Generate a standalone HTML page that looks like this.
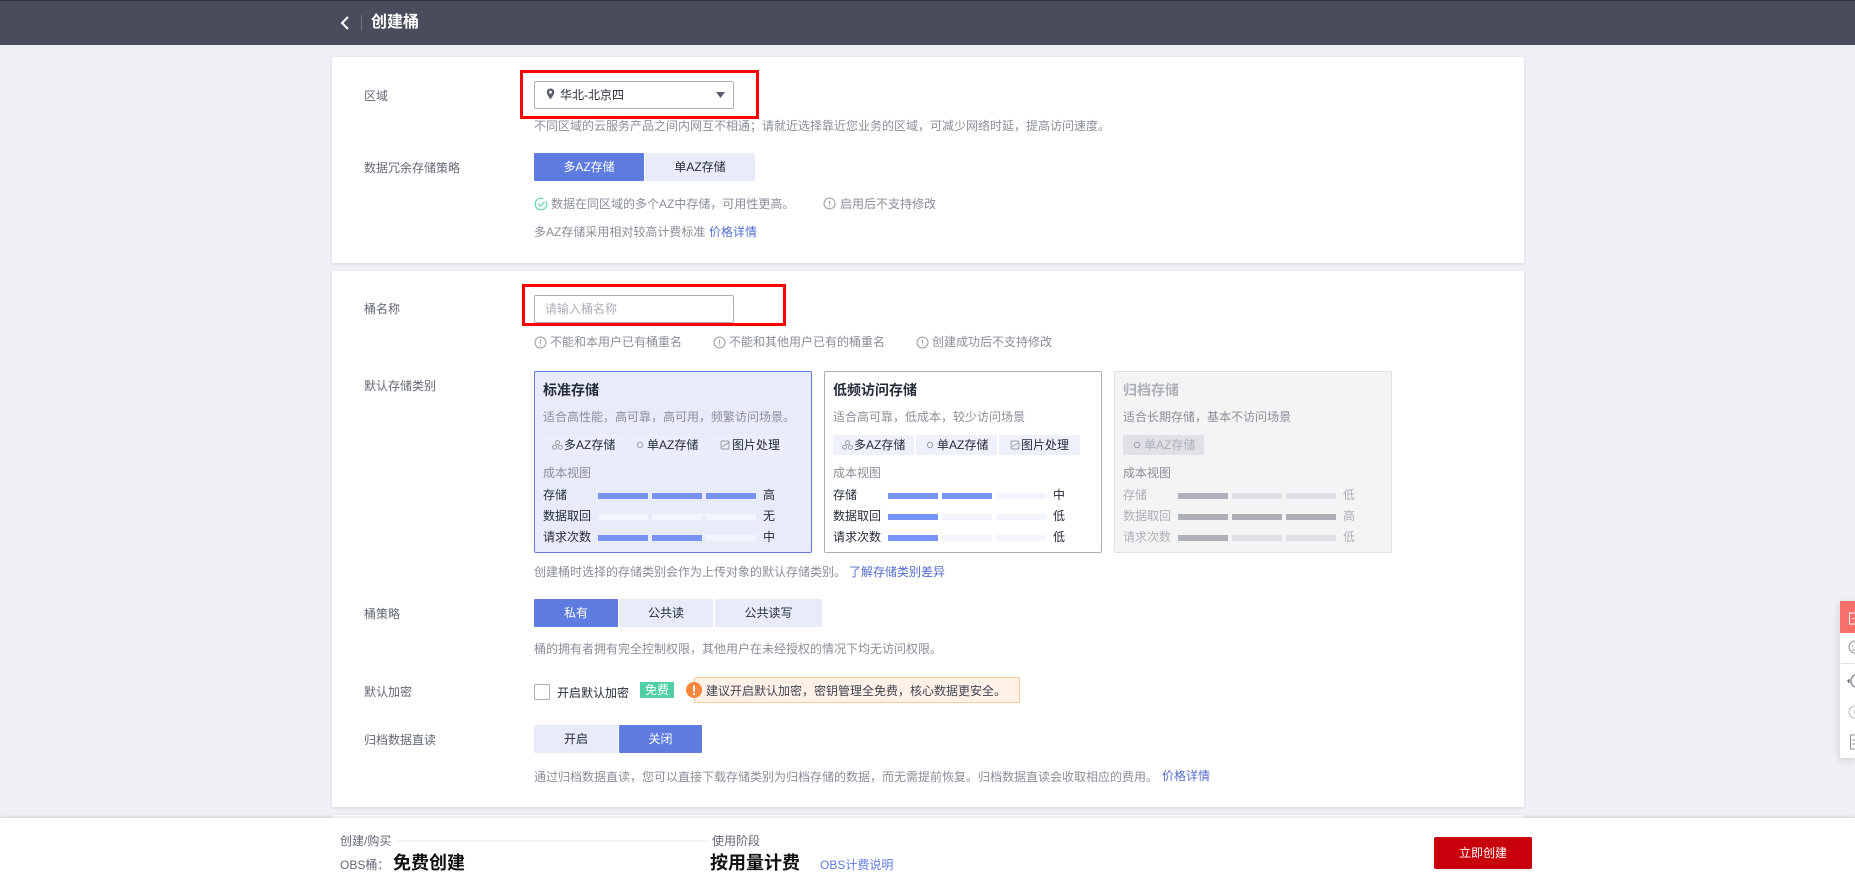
<!DOCTYPE html>
<html lang="zh-CN">
<head>
<meta charset="utf-8">
<title>创建桶</title>
<style>
html,body{margin:0;padding:0;width:1855px;height:879px;overflow:hidden;background:#eef0f5}
body{position:relative;font-family:"Liberation Sans","Noto Sans CJK SC",sans-serif;font-size:12px;color:#575d6c}
.a,.t,.b,.chip,svg{position:absolute}
.t{line-height:20px;height:20px;white-space:nowrap}
.lab{color:#636876}
.h{color:#8a8e99}
.d{color:#252b3a}
.l{color:#526ecc}
.card{position:absolute;left:332px;width:1192px;background:#fff;box-shadow:0 1px 3px rgba(60,70,90,.14)}
.b{line-height:28px;height:28px;text-align:center;background:#e8ecf8;color:#252b3a;border-radius:1px}
.b.on{background:#5e7ce0;color:#fff}
.box{position:absolute;top:371px;width:276px;height:180px;border:1px solid #adb0b8;background:#fff;border-radius:2px}
.title{font-size:14px;font-weight:bold;color:#252b3a}
.chip{top:435px;width:81px;height:20px;background:#eef1fb}
.bar{position:absolute;height:6px;width:50px;background:#f2f5fd}
.bar.f{background:#7693f5}
.bar.g{background:#adb0b8}
.bar.e{background:#dfe1e6}
.red{position:absolute;border:3px solid #f00;box-sizing:border-box}
.icn{fill:none;stroke:#9a9ea8;stroke-width:1}
</style>
</head>
<body>

<!-- header -->
<div class="a" style="left:0;top:0;width:1855px;height:45px;background:#484c5b;border-top:1px solid #30333d;box-sizing:border-box"></div>
<svg style="left:339px;top:15px" width="12" height="16" viewBox="0 0 12 16"><path d="M9 2L3 8l6 6" fill="none" stroke="#fff" stroke-width="2"/></svg>
<div class="a" style="left:361px;top:15px;width:1px;height:16px;background:#6f7380"></div>
<div class="t" style="left:371px;top:13px;font-size:16px;font-weight:bold;color:#fff">创建桶</div>

<!-- card 1 -->
<div class="card" style="top:57px;height:206px"></div>
<div class="t lab" style="left:364px;top:86px">区域</div>
<div class="a" style="left:534px;top:81px;width:200px;height:28px;box-sizing:border-box;border:1px solid #adb0b8;border-radius:2px;background:#fff"></div>
<svg style="left:546px;top:88px" width="9" height="13" viewBox="0 0 9 13"><path d="M4.5 0.5C2.3 0.5 0.8 2.2 0.8 4.2c0 2.6 3.7 7 3.7 7s3.7-4.4 3.7-7C8.2 2.2 6.7 0.5 4.5 0.5z" fill="#575d6c"/><circle cx="4.5" cy="4.2" r="1.4" fill="#fff"/></svg>
<div class="t d" style="left:560px;top:85px">华北-北京四</div>
<svg style="left:716px;top:92px" width="9" height="6" viewBox="0 0 9 6"><path d="M0 0h9L4.5 6z" fill="#575d6c"/></svg>
<div class="red" style="left:520px;top:70px;width:239px;height:49px"></div>
<div class="t h" style="left:534px;top:116px">不同区域的云服务产品之间内网互不相通；请就近选择靠近您业务的区域，可减少网络时延，提高访问速度。</div>

<div class="t lab" style="left:364px;top:158px">数据冗余存储策略</div>
<div class="b on" style="left:534px;top:153px;width:110px">多AZ存储</div>
<div class="b" style="left:645px;top:153px;width:110px">单AZ存储</div>
<svg style="left:534px;top:197px" width="14" height="14" viewBox="0 0 14 14"><path d="M12.2 4.5A5.8 5.8 0 1 1 9.5 1.8" fill="none" stroke="#5fd9ae" stroke-width="1.2"/><path d="M4 6.8l2.4 2.400 4.2-4.400" fill="none" stroke="#5fd9ae" stroke-width="1.2"/></svg>
<div class="t h" style="left:551px;top:194px">数据在同区域的多个AZ中存储，可用性更高。</div>
<svg style="left:823px;top:197px" width="13" height="13" viewBox="0 0 13 13"><circle class="icn" cx="6.5" cy="6.5" r="5.5"/><path d="M6.5 3.5v4M6.5 8.6v1.2" stroke="#9a9ea8" fill="none"/></svg>
<div class="t h" style="left:840px;top:194px">启用后不支持修改</div>
<div class="t h" style="left:534px;top:222px">多AZ存储采用相对较高计费标准</div>
<div class="t l" style="left:709px;top:222px">价格详情</div>

<!-- card 2 -->
<div class="card" style="top:271px;height:536px"></div>
<div class="t lab" style="left:364px;top:299px">桶名称</div>
<div class="a" style="left:534px;top:295px;width:200px;height:28px;box-sizing:border-box;border:1px solid #adb0b8;border-radius:2px;background:#fff"></div>
<div class="t" style="left:545px;top:299px;color:#adb0b8">请输入桶名称</div>
<div class="red" style="left:522px;top:284px;width:264px;height:42px"></div>

<svg style="left:534px;top:336px" width="13" height="13" viewBox="0 0 13 13"><circle class="icn" cx="6.5" cy="6.5" r="5.5"/><path d="M6.5 3.5v4M6.5 8.6v1.2" stroke="#9a9ea8" fill="none"/></svg>
<div class="t h" style="left:550px;top:332px">不能和本用户已有桶重名</div>
<svg style="left:713px;top:336px" width="13" height="13" viewBox="0 0 13 13"><circle class="icn" cx="6.5" cy="6.5" r="5.5"/><path d="M6.5 3.5v4M6.5 8.6v1.2" stroke="#9a9ea8" fill="none"/></svg>
<div class="t h" style="left:729px;top:332px">不能和其他用户已有的桶重名</div>
<svg style="left:916px;top:336px" width="13" height="13" viewBox="0 0 13 13"><circle class="icn" cx="6.5" cy="6.5" r="5.5"/><path d="M6.5 3.5v4M6.5 8.6v1.2" stroke="#9a9ea8" fill="none"/></svg>
<div class="t h" style="left:932px;top:332px">创建成功后不支持修改</div>

<div class="t lab" style="left:364px;top:376px">默认存储类别</div>

<!-- storage A -->
<div class="box" style="left:534px;border-color:#5e7ce0;background:#e8ecf8"></div>
<div class="t title" style="left:543px;top:380px">标准存储</div>
<div class="t h" style="left:543px;top:407px">适合高性能，高可靠，高可用，频繁访问场景。</div>
<div class="chip" style="left:543px;background:#eaeefa"></div>
<div class="chip" style="left:626px;background:#eaeefa"></div>
<div class="chip" style="left:709px;background:#eaeefa"></div>
<svg style="left:552px;top:440px" width="11" height="10" viewBox="0 0 11 10"><g class="icn"><circle cx="5.5" cy="2.6" r="2"/><circle cx="2.6" cy="7.2" r="2"/><circle cx="8.4" cy="7.2" r="2"/></g></svg>
<div class="t d" style="left:564px;top:435px">多AZ存储</div>
<svg style="left:636px;top:441px" width="8" height="8" viewBox="0 0 8 8"><circle class="icn" cx="4" cy="4" r="2.7"/></svg>
<div class="t d" style="left:647px;top:435px">单AZ存储</div>
<svg style="left:720px;top:440px" width="10" height="10" viewBox="0 0 10 10"><rect x="1" y="1" width="8" height="8" rx="1.5" fill="none" stroke="#9a9ea8"/><path d="M2 7l2.5-2 4-2" fill="none" stroke="#9a9ea8"/></svg>
<div class="t d" style="left:732px;top:435px">图片处理</div>
<div class="t h" style="left:543px;top:463px">成本视图</div>
<div class="t d" style="left:543px;top:485px">存储</div>
<div class="t d" style="left:543px;top:506px">数据取回</div>
<div class="t d" style="left:543px;top:527px">请求次数</div>
<div class="t d" style="left:763px;top:485px">高</div>
<div class="t d" style="left:763px;top:506px">无</div>
<div class="t d" style="left:763px;top:527px">中</div>
<div class="bar f" style="left:598px;top:493px"></div><div class="bar f" style="left:652px;top:493px"></div><div class="bar f" style="left:706px;top:493px"></div>
<div class="bar" style="left:598px;top:514px"></div><div class="bar" style="left:652px;top:514px"></div><div class="bar" style="left:706px;top:514px"></div>
<div class="bar f" style="left:598px;top:535px"></div><div class="bar f" style="left:652px;top:535px"></div><div class="bar" style="left:706px;top:535px"></div>

<!-- storage B -->
<div class="box" style="left:824px"></div>
<div class="t title" style="left:833px;top:380px">低频访问存储</div>
<div class="t h" style="left:833px;top:407px">适合高可靠，低成本，较少访问场景</div>
<div class="chip" style="left:833px"></div>
<div class="chip" style="left:916px"></div>
<div class="chip" style="left:999px"></div>
<svg style="left:842px;top:440px" width="11" height="10" viewBox="0 0 11 10"><g class="icn"><circle cx="5.5" cy="2.6" r="2"/><circle cx="2.6" cy="7.2" r="2"/><circle cx="8.4" cy="7.2" r="2"/></g></svg>
<div class="t d" style="left:854px;top:435px">多AZ存储</div>
<svg style="left:926px;top:441px" width="8" height="8" viewBox="0 0 8 8"><circle class="icn" cx="4" cy="4" r="2.7"/></svg>
<div class="t d" style="left:937px;top:435px">单AZ存储</div>
<svg style="left:1010px;top:440px" width="10" height="10" viewBox="0 0 10 10"><rect x="1" y="1" width="8" height="8" rx="1.5" fill="none" stroke="#9a9ea8"/><path d="M2 7l2.5-2 4-2" fill="none" stroke="#9a9ea8"/></svg>
<div class="t d" style="left:1021px;top:435px">图片处理</div>
<div class="t h" style="left:833px;top:463px">成本视图</div>
<div class="t d" style="left:833px;top:485px">存储</div>
<div class="t d" style="left:833px;top:506px">数据取回</div>
<div class="t d" style="left:833px;top:527px">请求次数</div>
<div class="t d" style="left:1053px;top:485px">中</div>
<div class="t d" style="left:1053px;top:506px">低</div>
<div class="t d" style="left:1053px;top:527px">低</div>
<div class="bar f" style="left:888px;top:493px"></div><div class="bar f" style="left:942px;top:493px"></div><div class="bar" style="left:996px;top:493px"></div>
<div class="bar f" style="left:888px;top:514px"></div><div class="bar" style="left:942px;top:514px"></div><div class="bar" style="left:996px;top:514px"></div>
<div class="bar f" style="left:888px;top:535px"></div><div class="bar" style="left:942px;top:535px"></div><div class="bar" style="left:996px;top:535px"></div>

<!-- storage C -->
<div class="box" style="left:1114px;border-color:#dfe1e6;background:#f4f4f4"></div>
<div class="t title" style="left:1123px;top:380px;color:#adb0b8">归档存储</div>
<div class="t h" style="left:1123px;top:407px">适合长期存储，基本不访问场景</div>
<div class="chip" style="left:1123px;background:#dfe1e6"></div>
<svg style="left:1133px;top:441px" width="8" height="8" viewBox="0 0 8 8"><circle class="icn" cx="4" cy="4" r="2.7"/></svg>
<div class="t" style="left:1144px;top:435px;color:#adb0b8">单AZ存储</div>
<div class="t h" style="left:1123px;top:463px">成本视图</div>
<div class="t" style="left:1123px;top:485px;color:#adb0b8">存储</div>
<div class="t" style="left:1123px;top:506px;color:#adb0b8">数据取回</div>
<div class="t" style="left:1123px;top:527px;color:#adb0b8">请求次数</div>
<div class="t" style="left:1343px;top:485px;color:#adb0b8">低</div>
<div class="t" style="left:1343px;top:506px;color:#adb0b8">高</div>
<div class="t" style="left:1343px;top:527px;color:#adb0b8">低</div>
<div class="bar g" style="left:1178px;top:493px"></div><div class="bar e" style="left:1232px;top:493px"></div><div class="bar e" style="left:1286px;top:493px"></div>
<div class="bar g" style="left:1178px;top:514px"></div><div class="bar g" style="left:1232px;top:514px"></div><div class="bar g" style="left:1286px;top:514px"></div>
<div class="bar g" style="left:1178px;top:535px"></div><div class="bar e" style="left:1232px;top:535px"></div><div class="bar e" style="left:1286px;top:535px"></div>

<div class="t h" style="left:534px;top:562px">创建桶时选择的存储类别会作为上传对象的默认存储类别。</div>
<div class="t l" style="left:849px;top:562px">了解存储类别差异</div>

<div class="t lab" style="left:364px;top:604px">桶策略</div>
<div class="b on" style="left:534px;top:599px;width:84px">私有</div>
<div class="b" style="left:619px;top:599px;width:94px">公共读</div>
<div class="b" style="left:715px;top:599px;width:107px">公共读写</div>
<div class="t h" style="left:534px;top:639px">桶的拥有者拥有完全控制权限，其他用户在未经授权的情况下均无访问权限。</div>

<div class="t lab" style="left:364px;top:682px">默认加密</div>
<div class="a" style="left:534px;top:684px;width:16px;height:16px;box-sizing:border-box;border:1px solid #adb0b8;border-radius:2px;background:#fff"></div>
<div class="t d" style="left:557px;top:683px">开启默认加密</div>
<div class="a" style="left:640px;top:682px;width:34px;height:16px;line-height:16px;text-align:center;background:#4fcfa5;color:#fff">免费</div>
<div class="a" style="left:694px;top:677px;width:326px;height:26px;box-sizing:border-box;background:#fff1e6;border:1px solid #fdc99a;border-radius:2px"></div>
<svg style="left:686px;top:682px" width="16" height="16" viewBox="0 0 16 16"><circle cx="8" cy="8" r="8" fill="#f5863c"/><path d="M8 3.5v6" stroke="#fff" stroke-width="2"/><circle cx="8" cy="12" r="1.2" fill="#fff"/></svg>
<div class="t d" style="left:706px;top:681px;color:#3f4454">建议开启默认加密，密钥管理全免费，核心数据更安全。</div>

<div class="t lab" style="left:364px;top:730px">归档数据直读</div>
<div class="b" style="left:534px;top:725px;width:84px">开启</div>
<div class="b on" style="left:619px;top:725px;width:83px">关闭</div>
<div class="t h" style="left:534px;top:767px">通过归档数据直读，您可以直接下载存储类别为归档存储的数据，而无需提前恢复。归档数据直读会收取相应的费用。</div>
<div class="t l" style="left:1162px;top:766px">价格详情</div>

<!-- card 3 -->
<div class="card" style="top:815px;height:10px"></div>

<!-- side tool -->
<div class="a" style="left:1840px;top:601px;width:15px;height:157px;background:#fff;box-shadow:0 2px 8px rgba(60,70,90,.2)"></div>
<div class="a" style="left:1840px;top:601px;width:15px;height:32px;background:#f66f6a"></div>
<div class="a" style="left:1841px;top:663px;width:14px;height:1px;background:#dfe1e6"></div>
<svg style="left:1840px;top:601px" width="15" height="157" viewBox="0 0 15 157">
<path d="M15 12H9.5v11H15" fill="none" stroke="#fff" stroke-width="1"/><rect x="12" y="17" width="2" height="1" fill="#fff"/>
<circle cx="15" cy="46" r="6" fill="none" stroke="#8a8e99"/><circle cx="12.5" cy="45" r=".7" fill="#8a8e99"/><path d="M12 49h3" stroke="#8a8e99"/>
<path d="M15 74a6 6 0 0 0-4 6 6 6 0 0 0 4 6" fill="none" stroke="#8a8e99" stroke-width="1.500"/><path d="M9.500 77.500l-2.500 2.500 2.500 2.500z" fill="#575d6c"/>
<circle cx="15" cy="111" r="6" fill="none" stroke="#b5b8c0"/><path d="M13 111h2" stroke="#b5b8c0"/>
<path d="M15 134h-4.500v14H15" fill="none" stroke="#8a8e99"/><path d="M12.500 139H15M12.500 143H15" stroke="#8a8e99"/>
</svg>

<!-- footer -->
<div class="a" style="left:0;top:818px;width:1855px;height:61px;background:#fff;box-shadow:0 -1px 3px rgba(60,70,90,.18)"></div>
<div class="t lab" style="left:340px;top:831px">创建/购买</div>
<div class="a" style="left:397px;top:840px;width:313px;height:2px;background:#f3f4f6"></div>
<div class="t lab" style="left:712px;top:831px">使用阶段</div>
<div class="t lab" style="left:340px;top:855px">OBS桶：</div>
<div class="t" style="left:393px;top:853px;font-size:18px;font-weight:bold;color:#111">免费创建</div>
<div class="t" style="left:710px;top:853px;font-size:18px;font-weight:bold;color:#111">按用量计费</div>
<div class="t l" style="left:820px;top:855px;color:#5e7ce0">OBS计费说明</div>
<div class="a" style="left:1434px;top:837px;width:98px;height:32px;line-height:32px;text-align:center;background:#c7000b;color:#fff;border-radius:2px">立即创建</div>

</body>
</html>
